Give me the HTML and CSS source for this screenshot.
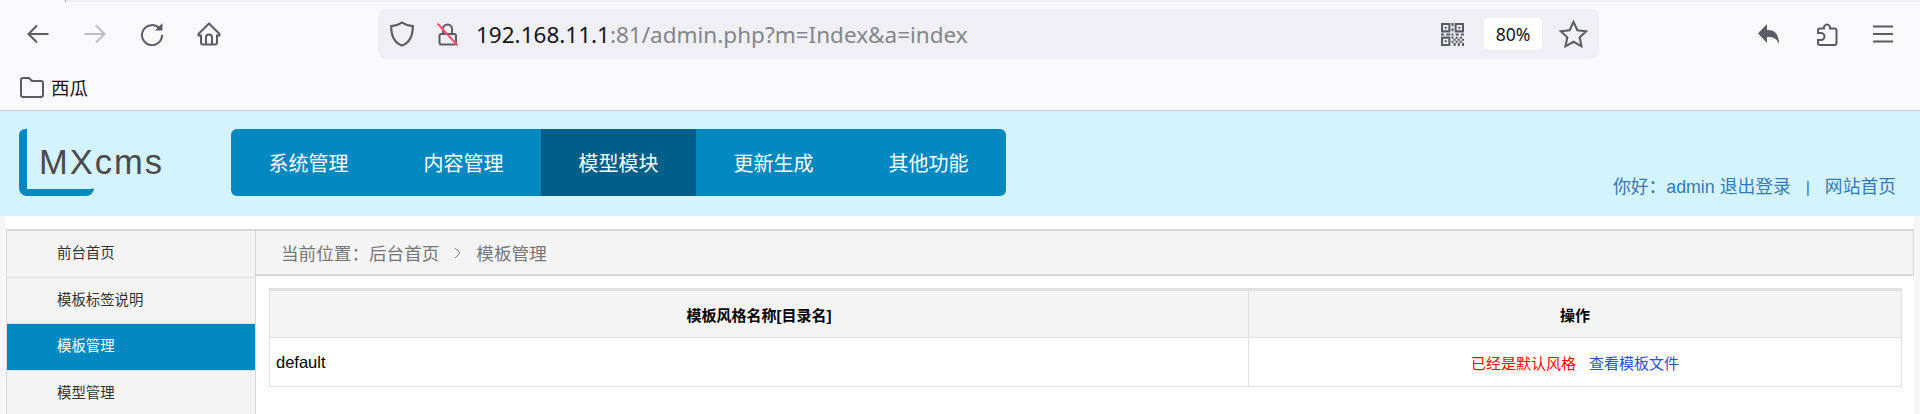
FILE: index.html
```html
<!DOCTYPE html>
<html lang="zh-CN">
<head>
    <meta charset="UTF-8">
    <title>MXcms</title>
    <link rel="stylesheet" href="styles.css">
</head>
<body>
    <div class="tab-strip"><div class="tab-current"></div></div>
    <div class="toolbar">
        <div class="nav-buttons">
            <svg class="icon" viewBox="0 0 24 24"><path d="M22.500 12H2.500M11 3.500L2.500 12l8.500 8.500"/></svg>
            <svg class="icon dim" viewBox="0 0 24 24"><path d="M1.500 12h20M13 3.500l8.500 8.500-8.500 8.500"/></svg>
            <svg class="icon" viewBox="0 0 24 24"><path d="M19.500 6.500A10 10 0 1 0 22 13"/><path class="solid" d="M15 8.500L22.500 1v7.500z"/></svg>
            <svg class="icon" viewBox="0 0 24 24"><path d="M12 1.500L1.500 12v1.500h2.500v7a2 2 0 0 0 2 2h12a2 2 0 0 0 2-2v-7h2.500V12z"/><path d="M9 22.500v-7a3 3 0 0 1 6 0v7"/></svg>
        </div>
        <div class="url-bar">
            <svg class="icon shield" viewBox="0 0 24 24"><path d="M12 1.500c3 2 6.500 3 10 3.200 0 9-3 15.500-10 18-7-2.500-10-9-10-18 3.500-.2 7-1.200 10-3.200z"/></svg>
            <svg class="icon lock" viewBox="0 0 24 24"><path d="M7 12V7a4.500 4.500 0 0 1 9 0v5"/><rect x="3.500" y="12" width="16.500" height="10.500" rx="2"/><path class="strike" d="M1.500 1.500l20 22"/></svg>
            <div class="url-text">192.168.11.1<span class="url-rest">:81/admin.php?m=Index&amp;a=index</span></div>
            <svg class="qr" viewBox="0 0 22 22"><path d="M0 0h9v9H0zM2 2v5h5V2zM3.500 3.500h2v2h-2zM13 0h9v9h-9zM15 2v5h5V2zM16.500 3.500h2v2h-2zM0 13h9v9H0zM2 15v5h5v-5zM3.500 16.500h2v2h-2zM10 0h2v3h-2zM10 5h2v3h-2zM0 10h3v2H0zM5 10h4v2H5zM10 10h2v2h-2zM14 10h3v2h-3zM19 10h3v2h-3zM10 13h2v2h-2zM12 15h2v2h-2zM14 13h2v2h-2zM16 15h2v2h-2zM18 13h2v2h-2zM20 15h2v2h-2zM10 17h2v2h-2zM14 17h2v2h-2zM18 17h2v2h-2zM12 19h2v3h-2zM16 19h2v3h-2zM20 19h2v3h-2z"/></svg>
            <div class="zoom-level">80%</div>
            <svg class="icon star" viewBox="0 0 24 24"><path d="M12 1.500l3.200 7 7.300.8-5.400 5 1.500 7.500-6.600-3.800-6.600 3.800 1.500-7.500-5.400-5 7.300-.8z"/></svg>
        </div>
        <div class="tool-buttons">
            <svg class="icon" viewBox="0 0 24 24"><path class="solid" d="M10 2v6c7-.5 12 3.500 12 14-2-5-5.500-7.500-12-7v6L1 11.500z"/></svg>
            <svg class="icon" viewBox="0 0 24 24"><path d="M9 6.500H5a2 2 0 0 0-2 2V11h3a3.500 3.500 0 0 1 0 7H3v3a2 2 0 0 0 2 2h14.500a2 2 0 0 0 2-2V8.500a2 2 0 0 0-2-2H15a3.100 3.100 0 1 0-6 0z"/></svg>
            <svg class="icon" viewBox="0 0 24 24"><path d="M0 4.500h20M0 12h20M0 19.500h20"/></svg>
        </div>
    </div>
    <div class="bookmarks">
        <svg class="icon folder" viewBox="0 0 24 24"><path d="M1 5a2 2 0 0 1 2-2h6l3 3h9a2 2 0 0 1 2 2v12a2 2 0 0 1-2 2H3a2 2 0 0 1-2-2z"/></svg>
        <span>西瓜</span>
    </div>

    <div class="header">
        <div class="logo">
            <span class="logo-text">MXcms</span>
        </div>
        <ul class="main-nav">
            <li>系统管理</li>
            <li>内容管理</li>
            <li class="active">模型模块</li>
            <li>更新生成</li>
            <li>其他功能</li>
        </ul>
        <div class="user-info">
            <a href="#">你好：admin</a> <a href="#">退出登录</a>
            <span class="sep">|</span>
            <a href="#">网站首页</a>
        </div>
    </div>

    <div class="page">
        <div class="main">
            <ul class="side-menu">
                <li>前台首页</li>
                <li>模板标签说明</li>
                <li class="active">模板管理</li>
                <li>模型管理</li>
            </ul>
            <div class="content">
                <div class="crumbs">
                    <span>当前位置：后台首页</span>
                    <svg class="crumb-arrow" viewBox="0 0 7 12"><path d="M1 1l5 5-5 5"/></svg>
                    <span>模板管理</span>
                </div>
                <table class="list">
                    <tr>
                        <th class="col-name">模板风格名称[目录名]</th>
                        <th>操作</th>
                    </tr>
                    <tr>
                        <td class="style-name">default</td>
                        <td class="ops"><span class="on">已经是默认风格</span><a href="#">查看模板文件</a></td>
                    </tr>
                </table>
            </div>
        </div>
    </div>
</body>
</html>
```

FILE: styles.css
```css
* {
    box-sizing: border-box;
}
html, body {
    margin: 0;
    padding: 0;
    height: 414px;
    overflow: hidden;
}
body {
    font-family: "Liberation Sans", "Noto Sans CJK SC", sans-serif;
    background-color: #f6f6f6;
}
ul {
    margin: 0;
    padding: 0;
    list-style: none;
}
a {
    text-decoration: none;
}

/* browser chrome */
.tab-strip {
    height: 2px;
    background-color: #f0f0f4;
}
.tab-current {
    width: 66px;
    height: 2px;
    border-right: 1px solid #9a9a9f;
    background-color: #f9f9fb;
}
.toolbar {
    display: flex;
    align-items: center;
    height: 64px;
    background-color: #f9f9fb;
}
.icon {
    width: 24px;
    height: 24px;
    flex: none;
    fill: none;
    stroke: #5b5b66;
    stroke-width: 2;
}
.icon .solid {
    fill: #5b5b66;
    stroke: none;
}
.icon.dim {
    stroke: #bdbdc3;
}
.nav-buttons {
    display: flex;
    gap: 33px;
    width: 378px;
    padding-left: 26px;
}
.url-bar {
    display: flex;
    align-items: center;
    width: 1221px;
    height: 50px;
    padding: 0 11px;
    border-radius: 8px;
    background-color: #f0f0f4;
}
.shield {
    width: 26px;
    height: 26px;
}
.lock {
    margin-left: 21px;
}
.lock .strike {
    stroke: #ff4f6e;
}
.url-text {
    flex: 1;
    margin-left: 16px;
    font-family: "Noto Sans", sans-serif;
    font-size: 22.500px;
    color: #15141a;
}
.url-rest {
    color: #85858c;
}
.qr {
    width: 23px;
    height: 23px;
    fill: #5b5b66;
}
.zoom-level {
    width: 58px;
    height: 32px;
    margin: 0 17px 0 20px;
    border-radius: 5px;
    background-color: #fff;
    font-family: "Noto Sans", sans-serif;
    font-size: 17.600px;
    line-height: 32px;
    text-align: center;
    color: #15141a;
}
.star {
    width: 29px;
    height: 29px;
    stroke-width: 1.700;
}
.tool-buttons {
    display: flex;
    gap: 34px;
    margin-left: 158px;
}
.bookmarks {
    display: flex;
    align-items: center;
    height: 45px;
    padding: 0 0 3px 20px;
    border-bottom: 1px solid #cfcfd3;
    background-color: #f9f9fb;
    font-size: 18.500px;
    color: #15141a;
}
.folder {
    margin-right: 7px;
}

/* site header */
.header {
    display: flex;
    height: 105px;
    padding: 18px 24px 0 19px;
    background-color: #d3f3ff;
}
.logo {
    width: 212px;
    height: 67px;
}
.logo-text {
    display: block;
    width: 75px;
    height: 67px;
    padding: 14px 0 0 12px;
    border-left: 8px solid #0089c1;
    border-bottom: 7px solid #0089c1;
    border-radius: 6px 0 8px 8px;
    font-size: 34.500px;
    letter-spacing: 2px;
    line-height: 38px;
    color: #4a4a4a;
    white-space: nowrap;
}
.main-nav {
    display: flex;
    height: 67px;
    overflow: hidden;
    border-radius: 6px;
    background-color: #0089c1;
}
.main-nav li {
    width: 155px;
    padding-top: 2px;
    font-size: 20px;
    line-height: 67px;
    text-align: center;
    color: #fff;
}
.main-nav li.active {
    background-color: #005f88;
}
.user-info {
    margin-left: auto;
    padding-top: 43px;
    font-size: 17.800px;
    color: #337ab7;
}
.user-info a {
    color: #337ab7;
}
.sep {
    margin: 0 10px;
    font-size: 16px;
}

/* admin page */
.page {
    height: 198px;
    margin: 0 6px 0 5px;
    padding: 13px 0 0 1px;
    background-color: #fff;
}
.main {
    display: flex;
    height: 185px;
    border-top: 2px solid #d8d8d8;
}
.side-menu {
    width: 250px;
    flex: none;
    border-left: 1px solid #d8d8d8;
    border-right: 1px solid #d8d8d8;
    background-color: #f4f4f4;
}
.side-menu li {
    height: 46.500px;
    padding-left: 50px;
    border-bottom: 1px solid #e0e0e0;
    font-size: 14.400px;
    line-height: 45px;
    color: #333;
}
.side-menu li.active {
    background-color: #0089c1;
    color: #fff;
}
.content {
    flex: 1;
    min-width: 0;
}
.crumbs {
    display: flex;
    align-items: center;
    height: 45px;
    padding-left: 25px;
    border-right: 1px solid #d8d8d8;
    border-bottom: 2px solid #d8d8d8;
    background-color: #f4f4f4;
    font-size: 17.600px;
    color: #777;
}
.crumb-arrow {
    width: 7px;
    height: 12px;
    margin: 0 15px;
    fill: none;
    stroke: #777;
}
.list {
    width: 1633px;
    margin: 12px 0 0 13px;
    border-collapse: collapse;
    table-layout: fixed;
    font-size: 15px;
    color: #000;
    border-top: 3px solid #e0e0e0;
}
.list th, .list td {
    height: 49px;
    padding: 0 6px;
    border: 1px solid #e0e0e0;
}
.list th {
    height: 48px;
    background-color: #f4f4f4;
    font-weight: bold;
}
.col-name {
    width: 979px;
}
.list .style-name {
    font-size: 16.500px;
}
.ops {
    text-align: center;
}
.on {
    margin-right: 13px;
    color: #f00;
}
.ops a {
    color: #2a4fd0;
}
```
